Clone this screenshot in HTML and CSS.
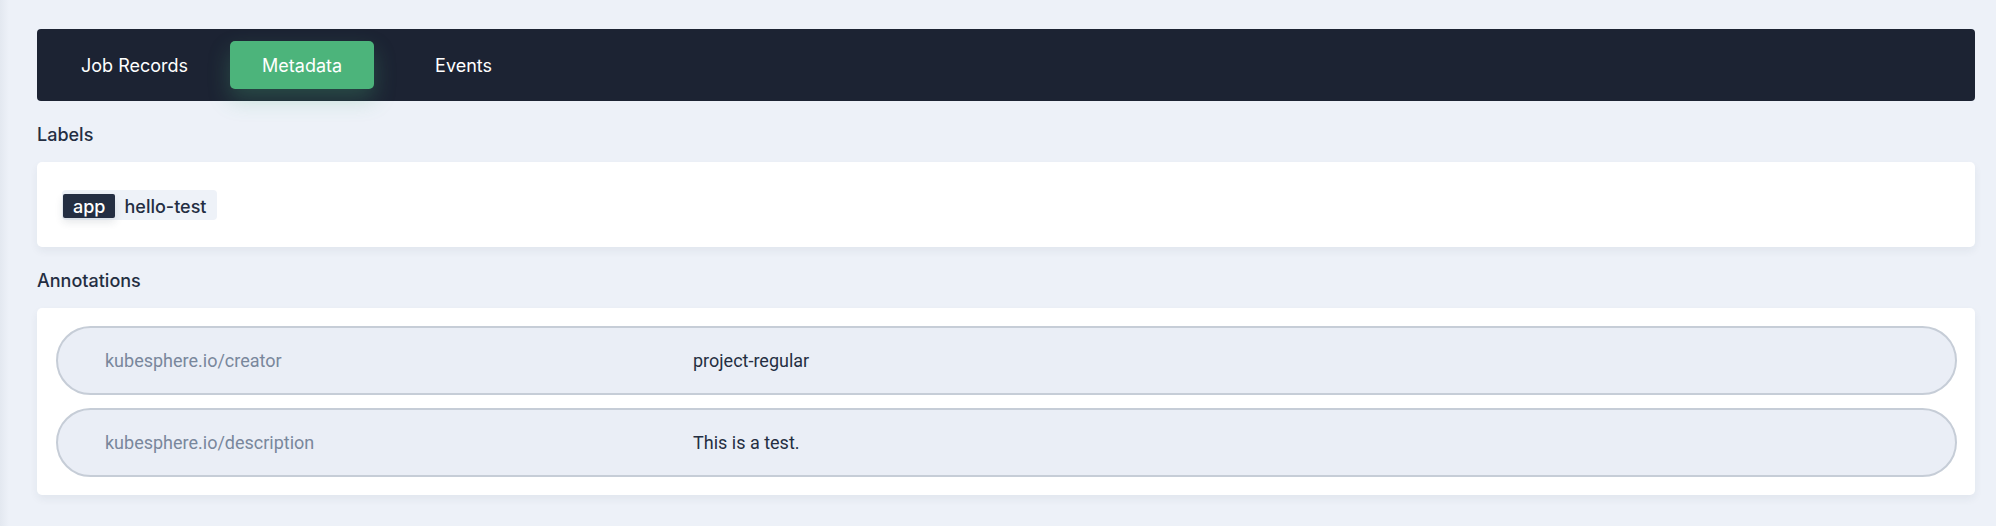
FILE: index.html
```html
<!DOCTYPE html>
<html lang="en">
<head>
<meta charset="utf-8">
<title>Metadata</title>
<link rel="stylesheet" href="styles.css">
</head>
<body>
<div class="page">
  <nav class="tabs">
    <div class="tab">Job Records</div>
    <div class="tab tab-active">Metadata</div>
    <div class="tab tab-wide">Events</div>
  </nav>

  <h3 class="section-title">Labels</h3>
  <div class="card card-labels">
    <span class="tag"><span class="tag-key">app</span><span class="tag-value">hello-test</span></span>
  </div>

  <h3 class="section-title">Annotations</h3>
  <div class="card card-annotations">
    <div class="row">
      <div class="row-key">kubesphere.io/creator</div>
      <div class="row-value">project-regular</div>
    </div>
    <div class="row">
      <div class="row-key">kubesphere.io/description</div>
      <div class="row-value">This is a test.</div>
    </div>
  </div>
</div>
</body>
</html>
```

FILE: styles.css
```css
html, body {
  margin: 0;
  padding: 0;
}
body {
  width: 1996px;
  height: 526px;
  overflow: hidden;
  background: linear-gradient(to right, #e3e8f0 0, #edf1f8 9px, #edf1f8 100%);
  font-family: Inter, "Noto Sans", sans-serif;
  color: #242e42;
}
.page {
  padding: 29px 21px 0 37px;
}
.tabs {
  display: flex;
  align-items: center;
  gap: 10px;
  height: 72px;
  box-sizing: border-box;
  padding: 0 12px;
  background: #1c2333;
  border-radius: 4px;
}
.tab {
  height: 48px;
  display: flex;
  align-items: center;
  padding: 0 32px;
  font-size: 18px;
  color: #ffffff;
  border-radius: 5px;
}
.tab-active {
  background: #4cb47b;
  box-shadow: 0 10px 22px rgba(76, 180, 123, 0.28);
}
.tab-wide {
  margin-left: 19px;
}
.section-title {
  margin: 22px 0 15px;
  font-size: 18px;
  line-height: 24px;
  font-weight: 500;
  color: #242e42;
}
.card {
  background: #ffffff;
  border-radius: 5px;
  box-shadow: 0 4px 8px rgba(36, 46, 66, 0.06);
}
.card-labels {
  height: 85px;
  box-sizing: border-box;
  padding: 28px 25px 0;
}
.tag {
  display: inline-flex;
  align-items: flex-end;
  height: 30px;
  box-sizing: border-box;
  padding: 0 10px 2px 1px;
  background: #eef2f8;
  border-radius: 4px;
  font-size: 18px;
  font-weight: 500;
}
.tag-key {
  display: flex;
  align-items: center;
  height: 24px;
  padding: 0 10px;
  background: #242e42;
  color: #ffffff;
  border-radius: 2px;
  box-shadow: 0 4px 8px rgba(36, 46, 66, 0.12);
}
.tag-value {
  display: flex;
  align-items: center;
  height: 24px;
  margin-left: 9px;
  color: #242e42;
}
.card-annotations {
  display: flex;
  flex-direction: column;
  gap: 13px;
  padding: 18px 18px 18px 19px;
}
.row {
  display: grid;
  grid-template-columns: 588px 1fr;
  align-items: center;
  height: 69px;
  box-sizing: border-box;
  padding: 0 47px;
  background: #eaeef6;
  border: 2px solid #c6cdd7;
  border-radius: 35px;
  font-family: Roboto, "Liberation Sans", sans-serif;
  font-size: 18px;
}
.row-key {
  color: #79879c;
}
.row-value {
  color: #242e42;
}
```
